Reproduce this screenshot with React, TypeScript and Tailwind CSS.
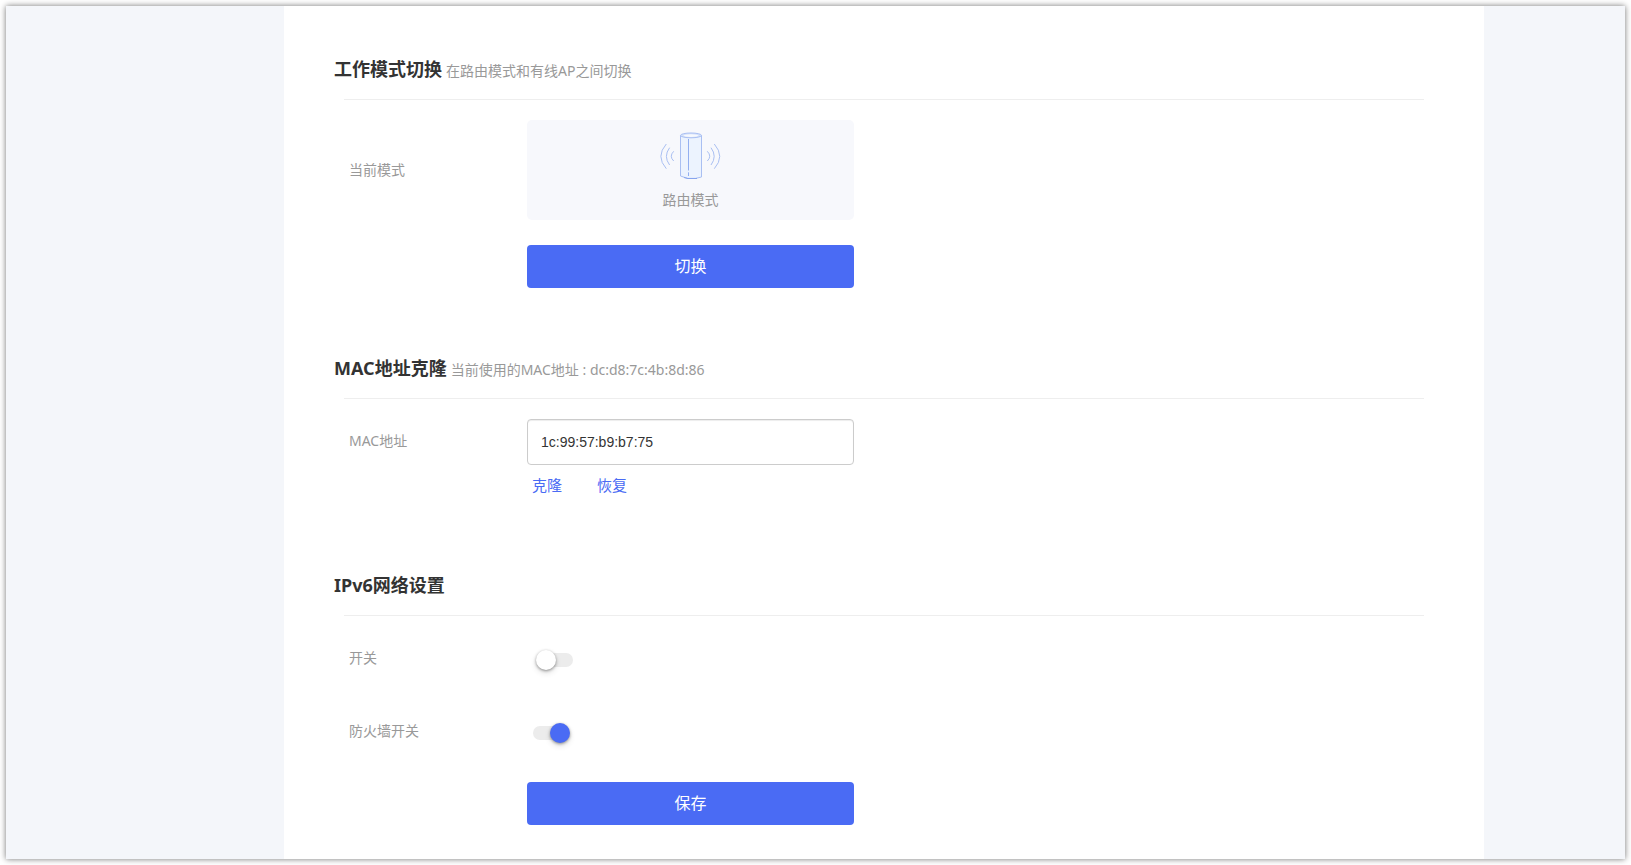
import { useState } from "react";
import type { ReactNode } from "react";

function RouterIcon() {
  return (
    <svg width="62" height="48" viewBox="0 0 62 48" fill="none" stroke="#a9bff2" aria-hidden="true">
      <path d="M20.5 3.5v40.5l7 2.4h8l6-1.4V3.5z" fill="#ecf3fe" />
      <path d="M24 45.5l4 1h9" stroke="#86a4ee" />
      <ellipse cx="31" cy="3.4" rx="10.5" ry="2.4" fill="#d5e2fb" />
      <ellipse cx="31" cy="3.6" rx="7.5" ry="1.3" fill="#f7f9fd" stroke="none" />
      <path d="M28.5 7v31.5M28.5 40.3V44" stroke="#93aff0" />
      <path d="M6.3 12Q-4.6 24.4 6.3 36.7M9.6 15.7Q3.2 24.4 9.6 33M13.7 19.3Q8.8 24.3 13.7 29" />
      <path d="M54.3 12Q65.2 24.4 54.3 36.7M51 15.7Q57.4 24.4 51 33M47.3 19.3Q52.2 24.3 47.3 29" />
    </svg>
  );
}

function Section({ title, note, children }: { title: string; note?: string; children: ReactNode }) {
  return (
    <section>
      <header className="mx-[50px] flex h-7 items-baseline gap-1">
        <h2 className="text-lg font-bold text-[#333]">{title}</h2>
        {note && <span className="text-sm text-[#999]">{note}</span>}
      </header>
      <hr className="mx-[60px] mt-4 border-[#eee]" />
      <div className="mt-5 pl-[65px] pr-[60px]">{children}</div>
    </section>
  );
}

function Switch({ id, checked, onChange }: { id: string; checked: boolean; onChange: (on: boolean) => void }) {
  return (
    <input
      id={id}
      type="checkbox"
      role="switch"
      checked={checked}
      onChange={(e) => onChange(e.target.checked)}
      className="relative ml-2.5 block h-3.5 w-9 cursor-pointer appearance-none rounded-full bg-[#ececec] before:absolute before:-top-[3px] before:-left-px before:size-5 before:rounded-full before:bg-white before:shadow-[0_1px_3px_rgba(0,0,0,0.4),0_3px_6px_rgba(0,0,0,0.12)] checked:ml-1.5 checked:before:left-[17px] checked:before:bg-[#4a6bf4]"
    />
  );
}

const row = "grid grid-cols-[178px_minmax(0,327px)]";
const label = "text-sm leading-5 text-[#999]";
const primary = "h-[43px] w-full cursor-pointer rounded-[4px] bg-[#4a6bf4] pb-0.5 text-base text-white hover:bg-[#3f60e6]";

export default function App() {
  const [mac, setMac] = useState("1c:99:57:b9:b7:75");
  const [ipv6, setIpv6] = useState(false);
  const [firewall, setFirewall] = useState(true);

  return (
    <div className="flex min-h-screen bg-white p-1.5 font-['Noto_Sans','Noto_Sans_CJK_SC',sans-serif]">
      <div className="flex-1 bg-[#f4f6fa] pr-[141px] pl-[278px] shadow-[0_0_6px_rgba(0,0,0,0.55)]">
        <main className="flex min-h-full flex-col gap-[66px] bg-white pt-[49px] pb-8">
          <Section title="工作模式切换" note="在路由模式和有线AP之间切换">
            <div className={`${row} gap-y-[25px]`}>
              <span className={`${label} self-center`}>当前模式</span>
              <div className="flex h-[100px] flex-col items-center rounded-[5px] bg-[#f7f8fc] pt-3">
                <RouterIcon />
                <span className={`${label} mt-2.5`}>路由模式</span>
              </div>
              <button type="button" className={`${primary} col-start-2`}>
                切换
              </button>
            </div>
          </Section>

          <Section title="MAC地址克隆" note="当前使用的MAC地址 : dc:d8:7c:4b:8d:86">
            <div className={row}>
              <label htmlFor="mac" className={`${label} self-center pb-0.5`}>
                MAC地址
              </label>
              <input
                id="mac"
                type="text"
                value={mac}
                onChange={(e) => setMac(e.target.value)}
                className="h-[46px] w-full rounded-[4px] border border-[#ccc] px-[13px] font-['Liberation_Sans',Arial,sans-serif] text-sm text-[#333] shadow-[inset_0_1px_1px_rgba(0,0,0,0.075)] outline-none focus:border-[#4a6bf4]"
              />
              <div className="col-start-2 mt-1 flex gap-[35px] pb-1 pl-[5px] text-[15px] leading-8 text-[#4a6bf4]">
                <a href="#clone">克隆</a>
                <a href="#restore">恢复</a>
              </div>
            </div>
          </Section>

          <Section title="IPv6网络设置">
            <div className={`${row} items-center gap-y-[25px]`}>
              <label htmlFor="ipv6" className={`${label} pb-1`}>
                开关
              </label>
              <div className="flex h-12 items-center">
                <Switch id="ipv6" checked={ipv6} onChange={setIpv6} />
              </div>
              <label htmlFor="firewall" className={`${label} pb-1`}>
                防火墙开关
              </label>
              <div className="flex h-12 items-center">
                <Switch id="firewall" checked={firewall} onChange={setFirewall} />
              </div>
              <button type="button" className={`${primary} col-start-2`}>
                保存
              </button>
            </div>
          </Section>
        </main>
      </div>
    </div>
  );
}
